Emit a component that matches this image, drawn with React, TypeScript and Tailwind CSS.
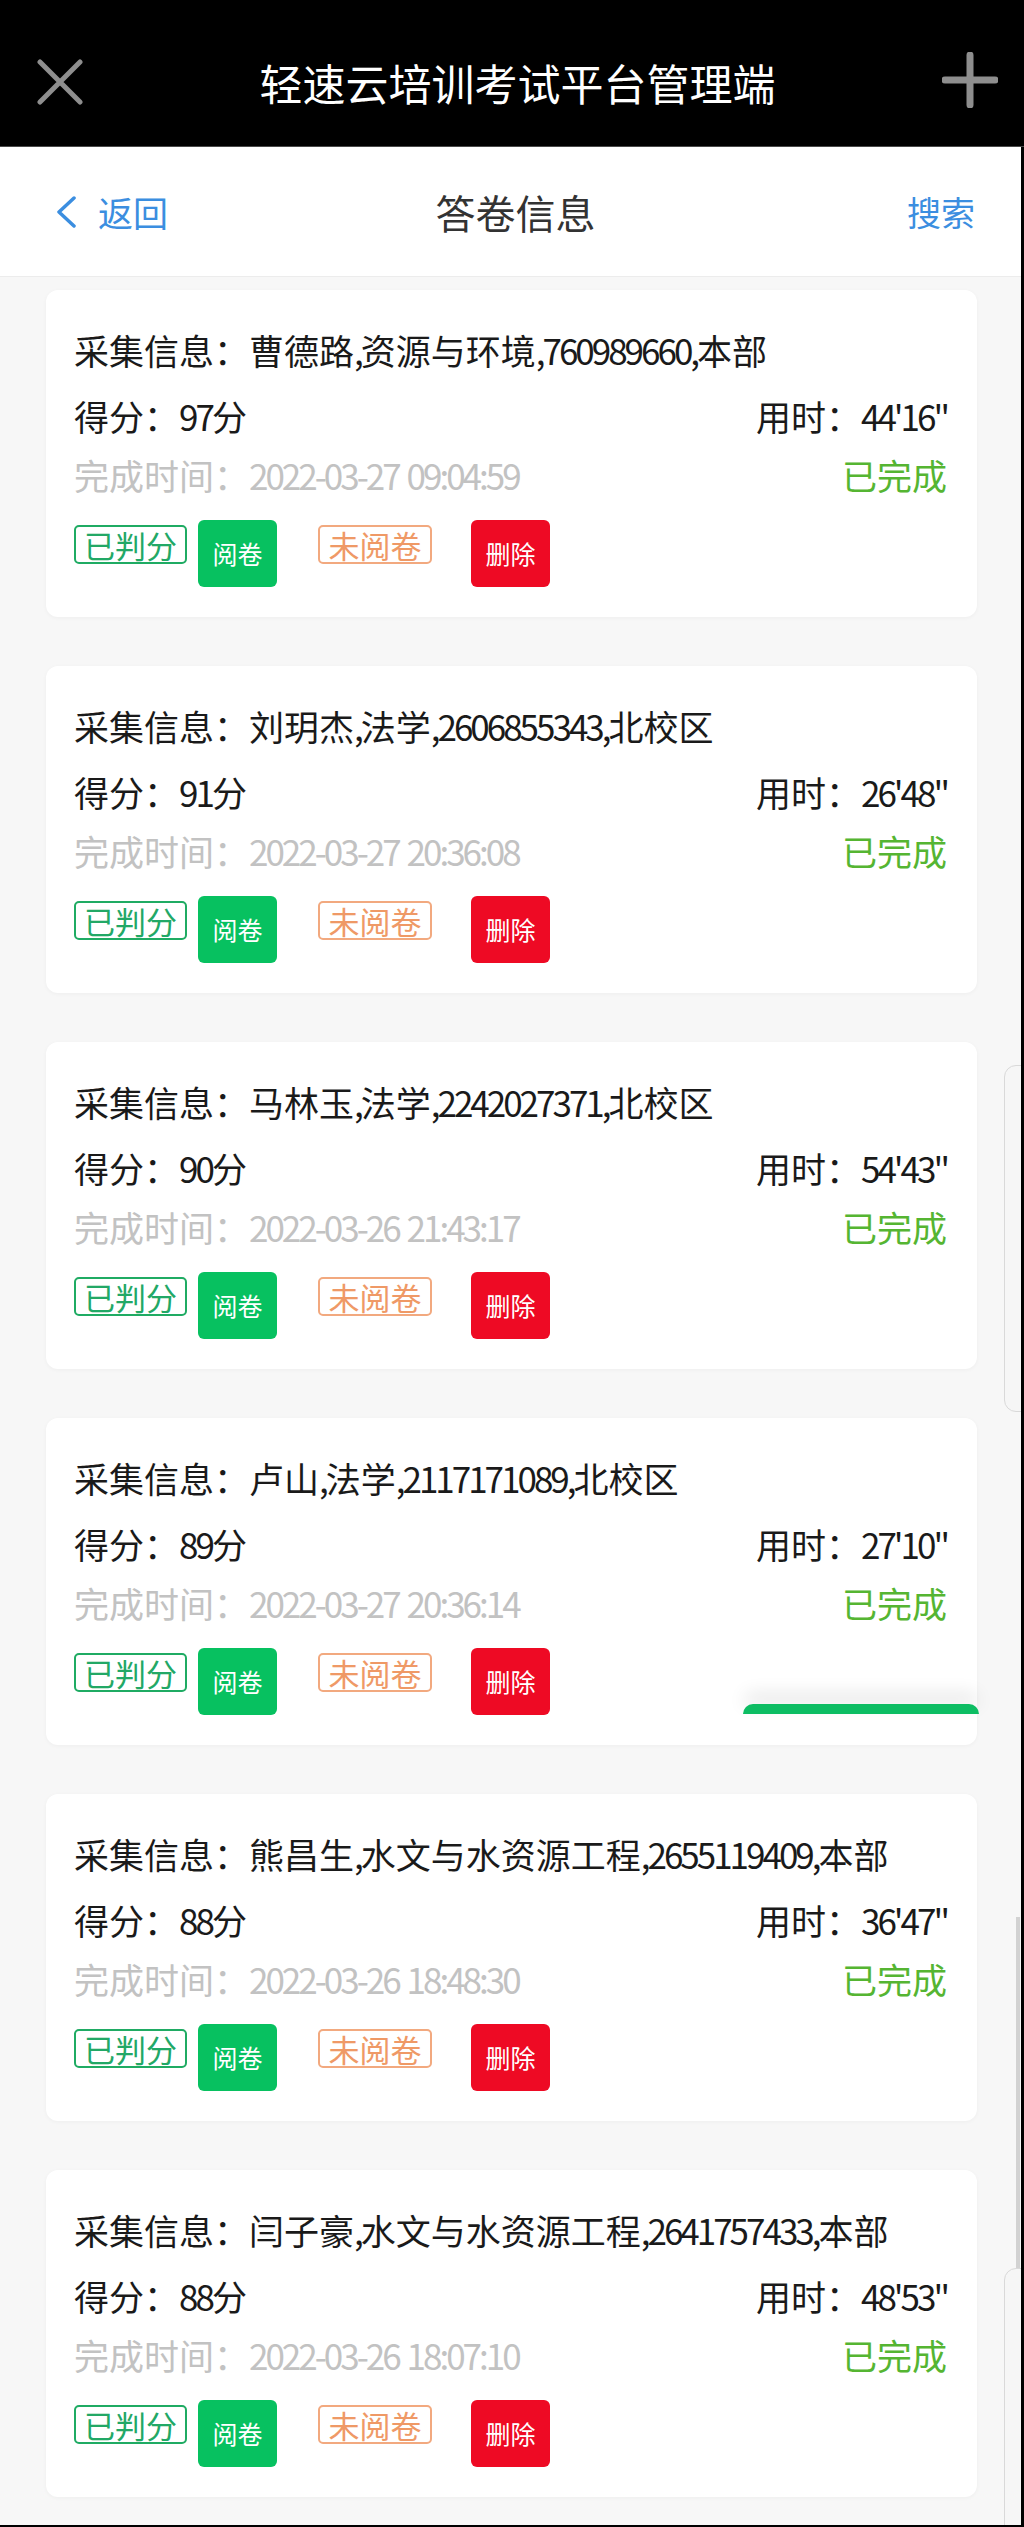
import React from "react";

interface AnswerRecord {
  info: string;
  score: number;
  used: string;
  finished: string;
}

const records: AnswerRecord[] = [
  { info: "曹德路,资源与环境,760989660,本部", score: 97, used: "44'16\"", finished: "2022-03-27 09:04:59" },
  { info: "刘玥杰,法学,2606855343,北校区", score: 91, used: "26'48\"", finished: "2022-03-27 20:36:08" },
  { info: "马林玉,法学,2242027371,北校区", score: 90, used: "54'43\"", finished: "2022-03-26 21:43:17" },
  { info: "卢山,法学,2117171089,北校区", score: 89, used: "27'10\"", finished: "2022-03-27 20:36:14" },
  { info: "熊昌生,水文与水资源工程,2655119409,本部", score: 88, used: "36'47\"", finished: "2022-03-26 18:48:30" },
  { info: "闫子豪,水文与水资源工程,2641757433,本部", score: 88, used: "48'53\"", finished: "2022-03-26 18:07:10" },
];

// latin runs in the phone font are condensed, squeeze them a bit
const Narrow = ({ text }: { text: string }) => (
  <>
    {text.split(/([\x21-\x7e]+)/).map((part, i) =>
      /[\x21-\x7e]/.test(part) ? (
        <span key={i} className="tracking-[-3px]">
          {part}
        </span>
      ) : (
        <React.Fragment key={i}>{part}</React.Fragment>
      )
    )}
  </>
);

const RecordCard = ({ record }: { record: AnswerRecord }) => (
  <div className="ml-[46px] mb-[49px] w-[931px] h-[327px] rounded-[12px] bg-white pl-[28px] pr-[30px] pt-[36px] shadow-[0_1px_4px_rgba(0,0,0,0.04)]">
    <div className="text-[35px] leading-[48px] text-[#1a1a1a] whitespace-nowrap">
      <Narrow text={`采集信息：${record.info}`} />
    </div>
    <div className="mt-[18px] flex justify-between text-[35px] leading-[48px] text-[#1a1a1a]">
      <span>
        <Narrow text={`得分：${record.score}分`} />
      </span>
      <span>
        <Narrow text={`用时：${record.used}`} />
      </span>
    </div>
    <div className="mt-[11px] flex justify-between text-[35px] leading-[48px]">
      <span className="whitespace-pre text-[#c2c2c2]">
        <Narrow text={`完成时间：${record.finished}`} />
      </span>
      <span className="text-[#55b532]">已完成</span>
    </div>
    <div className="mt-[21px] flex items-start">
      <span className="mt-[5px] flex h-[39px] w-[113px] items-center justify-center rounded-[5px] border-2 border-[#1fab63] text-[31px] leading-none text-[#22a866]">
        已判分
      </span>
      <button className="ml-[11px] flex h-[67px] w-[79px] items-center justify-center rounded-[6px] bg-[#07c160] text-[25px] leading-none text-white">
        阅卷
      </button>
      <span className="ml-[41px] mt-[5px] flex h-[39px] w-[114px] items-center justify-center rounded-[5px] border-2 border-[#f2a97f] text-[31px] leading-none text-[#ef9966]">
        未阅卷
      </span>
      <button className="ml-[39px] flex h-[67px] w-[79px] items-center justify-center rounded-[6px] bg-[#ee0a24] text-[25px] leading-none text-white">
        删除
      </button>
    </div>
  </div>
);

export default function App() {
  return (
    <div className="relative h-[2527px] w-[1024px] overflow-hidden bg-[#f7f7f7] font-['Noto_Sans_CJK_SC',sans-serif]">
      <header className="flex h-[147px] items-center border-b border-[#4a4a4a] bg-black pl-[37px] pr-[26px] pt-[18px]">
        <div className="flex flex-1 items-center">
          <svg width="46" height="46" viewBox="0 0 46 46">
            <path d="M3 3 L43 43 M43 3 L3 43" stroke="#8e8e8e" strokeWidth="5" strokeLinecap="round" />
          </svg>
        </div>
        <h1 className="text-[43px] leading-none text-white">轻速云培训考试平台管理端</h1>
        <div className="flex flex-1 justify-end">
          <svg width="56" height="56" viewBox="0 0 56 56" className="mt-[-4px]">
            <path d="M28 3 V53 M3 28 H53" stroke="#8e8e8e" strokeWidth="7" strokeLinecap="round" />
          </svg>
        </div>
      </header>

      <nav className="flex h-[130px] items-center border-b border-[#ececec] bg-white pl-[56px] pr-[49px]">
        <div className="flex flex-1 items-center gap-[20px] text-[35px] leading-none text-[#3b8ee0]">
          <svg width="22" height="32" viewBox="0 0 22 32">
            <path d="M18 2 L3 16 L18 30" fill="none" stroke="#3b8ee0" strokeWidth="3.5" strokeLinecap="round" strokeLinejoin="round" />
          </svg>
          <span>返回</span>
        </div>
        <div className="text-[40px] leading-none text-[#333]">答卷信息</div>
        <div className="flex flex-1 justify-end text-[34px] leading-none text-[#3b8ee0]">搜索</div>
      </nav>

      <main className="pt-[13px]">
        {records.map((r) => (
          <RecordCard key={r.info} record={r} />
        ))}
      </main>

      <div className="absolute left-[743px] top-[1704px] h-[10px] w-[236px] rounded-t-[10px] bg-[#0dbd63] shadow-[0_-10px_18px_rgba(0,0,0,0.12)]" />

      <div className="absolute left-[1004px] top-[1065px] h-[347px] w-[40px] rounded-l-[12px] border border-[#d9d9d9] bg-[#f6f6f6]" />
      <div className="absolute left-[1016px] top-[1917px] bottom-0 w-[4px] bg-[#d2d2d2]" />
      <div className="absolute left-[1004px] top-[2268px] h-[300px] w-[40px] rounded-l-[12px] border border-[#d9d9d9] bg-[#f6f6f6]" />

      <div className="absolute right-0 top-[147px] bottom-0 w-[3px] bg-black" />
      <div className="absolute bottom-0 left-0 right-0 h-[2px] bg-black" />
    </div>
  );
}
